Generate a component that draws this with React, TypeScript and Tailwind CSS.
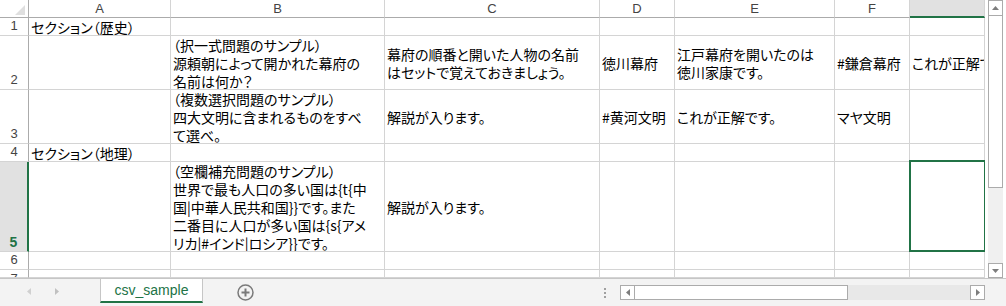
import React from 'react';

const HEAD = "border-r border-b border-r-[#d4d4d4] border-b-[#ababab] flex items-center justify-center text-[13px] leading-[16px] text-[#444] font-['Liberation_Sans',sans-serif]";
const ROWHEAD = "border-r border-b border-r-[#ababab] border-b-[#d4d4d4] flex justify-center text-[13px] leading-[16px] text-[#444] font-['Liberation_Sans',sans-serif] overflow-hidden";
const CELL = "border-r border-b border-[#d4d4d4] flex items-center pl-[2px] whitespace-nowrap overflow-hidden";

function ColHead({ label, selected }: { label: string; selected?: boolean }) {
  if (selected) {
    return (
      <div className="border-r border-r-[#d4d4d4] border-b-2 border-b-[#217346] bg-[#e1e1e1] flex items-center justify-center text-[13px] leading-[16px] text-[#444] font-['Liberation_Sans',sans-serif]">
        {label}
      </div>
    );
  }
  return <div className={HEAD}>{label}</div>;
}

function RowHead({ n, selected, cut }: { n: number; selected?: boolean; cut?: boolean }) {
  if (selected) {
    return (
      <div className="border-r-2 border-b border-r-[#217346] border-b-[#d4d4d4] bg-[#e1e1e1] flex items-end justify-center pb-[1px] text-[14px] leading-[16px] font-bold text-[#217346] font-['Liberation_Sans',sans-serif]">
        {n}
      </div>
    );
  }
  return (
    <div className={`${ROWHEAD} ${cut ? 'items-start pt-[1px]' : 'items-end pb-[1px]'}`}>{n}</div>
  );
}

function Cell({ lines, children }: { lines?: string[]; children?: React.ReactNode }) {
  return (
    <div className={CELL}>
      {lines ? (
        <div>
          {lines.map((l, i) => (
            <div key={i}>{l}</div>
          ))}
        </div>
      ) : (
        children
      )}
    </div>
  );
}

function Empty() {
  return <div className="border-r border-b border-[#d4d4d4]" />;
}

function Tri({ dir, color }: { dir: 'up' | 'down' | 'left' | 'right'; color: string }) {
  const pts = {
    up: '0,4 7,4 3.5,0',
    down: '0,0 7,0 3.5,4',
    left: '4,0 4,7 0,3.5',
    right: '0,0 0,7 4,3.5',
  }[dir];
  const w = dir === 'up' || dir === 'down' ? 7 : 4;
  const h = dir === 'up' || dir === 'down' ? 4 : 7;
  return (
    <svg width={w} height={h} viewBox={`0 0 ${w} ${h}`}>
      <polygon points={pts} fill={color} />
    </svg>
  );
}

export default function App() {
  return (
    <div className="w-[1006px] h-[306px] bg-white flex flex-col overflow-hidden">
      <div className="flex h-[278px]">
        <div className="grid grid-cols-[29px_142px_214px_215px_75px_160px_75px_75px] grid-rows-[18px_18px_54px_54px_18px_90px_18px_8px] w-[985px] h-[278px] overflow-hidden font-['Noto_Sans_CJK_JP',sans-serif] text-[14px] leading-[18px] text-black [font-feature-settings:'palt']">
          {/* header */}
          <div className="border-r border-b border-r-[#ababab] border-b-[#ababab] flex items-end justify-end pr-[3px] pb-[2px]">
            <svg width="10" height="10" viewBox="0 0 10 10">
              <polygon points="10,0 10,10 0,10" fill="#dfdfdf" />
            </svg>
          </div>
          <ColHead label="A" />
          <ColHead label="B" />
          <ColHead label="C" />
          <ColHead label="D" />
          <ColHead label="E" />
          <ColHead label="F" />
          <ColHead label="" selected />

          {/* row 1 */}
          <RowHead n={1} />
          <Cell>セクション（歴史）</Cell>
          <Empty />
          <Empty />
          <Empty />
          <Empty />
          <Empty />
          <Empty />

          {/* row 2 */}
          <RowHead n={2} />
          <Empty />
          <Cell lines={['（択一式問題のサンプル）', '源頼朝によって開かれた幕府の', '名前は何か？']} />
          <Cell lines={['幕府の順番と開いた人物の名前', 'はセットで覚えておきましょう。']} />
          <Cell>徳川幕府</Cell>
          <Cell lines={['江戸幕府を開いたのは', '徳川家康です。']} />
          <Cell>#鎌倉幕府</Cell>
          <Cell>これが正解です。</Cell>

          {/* row 3 */}
          <RowHead n={3} />
          <Empty />
          <Cell lines={['（複数選択問題のサンプル）', '四大文明に含まれるものをすべ', 'て選べ。']} />
          <Cell>解説が入ります。</Cell>
          <Cell>#黄河文明</Cell>
          <Cell>これが正解です。</Cell>
          <Cell>マヤ文明</Cell>
          <Empty />

          {/* row 4 */}
          <RowHead n={4} />
          <Cell>セクション（地理）</Cell>
          <Empty />
          <Empty />
          <Empty />
          <Empty />
          <Empty />
          <Empty />

          {/* row 5 */}
          <RowHead n={5} selected />
          <Empty />
          <Cell
            lines={[
              '（空欄補充問題のサンプル）',
              '世界で最も人口の多い国は{t{中',
              '国|中華人民共和国}}です。また',
              '二番目に人口が多い国は{s{アメ',
              'リカ|#インド|ロシア}}です。',
            ]}
          />
          <Cell>解説が入ります。</Cell>
          <Empty />
          <Empty />
          <Empty />
          <div className="relative border-r border-b border-[#d4d4d4]">
            <div className="absolute -left-px -top-[2px] -bottom-px -right-[2px] border-2 border-[#217346]" />
          </div>

          {/* row 6 */}
          <RowHead n={6} />
          <Empty />
          <Empty />
          <Empty />
          <Empty />
          <Empty />
          <Empty />
          <Empty />

          {/* row 7 */}
          <RowHead n={7} cut />
          <Empty />
          <Empty />
          <Empty />
          <Empty />
          <Empty />
          <Empty />
          <Empty />
        </div>

        {/* vertical scrollbar */}
        <div className="w-[21px] flex flex-col pl-[3px] pr-[3px]">
          <div className="h-[16px] border border-[#ababab] bg-white flex items-center justify-center">
            <Tri dir="up" color="#7d7d7d" />
          </div>
          <div className="h-[172px] border border-t-0 border-[#ababab] bg-white" />
          <div className="flex-1 bg-[#f0f0f0]" />
          <div className="h-[15px] border border-[#ababab] bg-white flex items-center justify-center">
            <Tri dir="down" color="#7d7d7d" />
          </div>
        </div>
      </div>

      {/* sheet tab bar */}
      <div className="h-[28px] border-t border-[#c6c6c6] bg-[#f3f3f3] flex items-start">
        <div className="w-[100px] h-[24px] flex items-center pl-[27px] gap-[24px]">
          <Tri dir="left" color="#d0d0d0" />
          <Tri dir="right" color="#c0c0c0" />
        </div>
        <div className="w-[103px] h-[24px] bg-white border-x border-[#c6c6c6] border-b-2 border-b-[#217346] flex items-center justify-center text-[14px] text-[#217346] font-['Liberation_Sans',sans-serif]">
          csv_sample
        </div>
        <div className="ml-[34px] mt-[5px]">
          <svg width="17" height="17" viewBox="0 0 17 17">
            <circle cx="8.5" cy="8.5" r="7.5" fill="none" stroke="#7a7a7a" strokeWidth="1.5" />
            <line x1="4.5" y1="8.5" x2="12.5" y2="8.5" stroke="#7a7a7a" strokeWidth="2" />
            <line x1="8.5" y1="4.5" x2="8.5" y2="12.5" stroke="#7a7a7a" strokeWidth="2" />
          </svg>
        </div>
        <div className="ml-auto mr-[21px] mt-[6px] flex items-center">
          <div className="flex flex-col gap-[2px]">
            <div className="w-[2px] h-[2px] bg-[#a0a0a0]" />
            <div className="w-[2px] h-[2px] bg-[#a0a0a0]" />
            <div className="w-[2px] h-[2px] bg-[#a0a0a0]" />
          </div>
          <div className="ml-[14px] w-[365px] h-[15px] flex bg-[#e8e8e8]">
            <div className="w-[15px] border border-[#ababab] bg-white flex items-center justify-center">
              <Tri dir="left" color="#7d7d7d" />
            </div>
            <div className="w-[213px] border border-l-0 border-[#ababab] bg-white" />
            <div className="flex-1" />
            <div className="w-[15px] border border-[#ababab] bg-white flex items-center justify-center">
              <Tri dir="right" color="#7d7d7d" />
            </div>
          </div>
        </div>
      </div>
    </div>
  );
}
